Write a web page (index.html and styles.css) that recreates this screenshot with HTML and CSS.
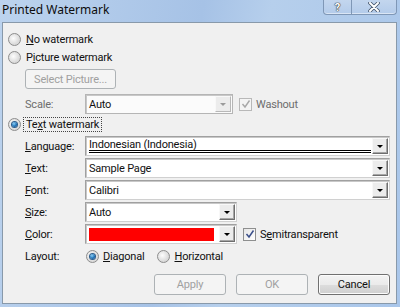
FILE: index.html
```html
<!DOCTYPE html>
<html>
<head>
    <title>Printed Watermark</title>
    <link rel="stylesheet" href="styles.css">
</head>
<body>
    <div class="frame">
        <div class="titlebar">
            <span class="title">Printed Watermark</span>
            <div class="caption-btns">
                <span class="cbtn help">?</span>
                <span class="cbtn close">
                    <svg width="12" height="10" viewBox="0 0 12 10">
                        <path d="M2 1 L10 9 M10 1 L2 9" stroke="#44546a" stroke-width="3.6" stroke-linecap="round"/>
                        <path d="M2 1 L10 9 M10 1 L2 9" stroke="#ffffff" stroke-width="2" stroke-linecap="round"/>
                    </svg>
                </span>
            </div>
        </div>
        <div class="client">
            <div class="opt row-no"><span class="radio"></span><span><u>N</u>o watermark</span></div>
            <div class="opt row-pic"><span class="radio"></span><span>P<u>i</u>cture watermark</span></div>
            <div class="indent">
                <div class="btn disabled select-pic">Select Picture...</div>
                <div class="field-row scale-row">
                    <span class="label disabled-text">Scale:</span>
                    <div class="combo disabled short-scale">
                        <span class="value">Auto</span>
                        <span class="drop"><span class="arrow gray"></span></span>
                    </div>
                    <div class="check disabled-check"><span class="box"><svg width="10" height="10" viewBox="0 0 10 10"><path d="M1.5 5 L4 8 L8.5 1.5" fill="none" stroke="#a8a8a8" stroke-width="1.4"/></svg></span><span class="disabled-text">Washout</span></div>
                </div>
            </div>
            <div class="opt row-text"><span class="radio on"></span><span class="focus">Te<u>x</u>t watermark</span></div>
            <div class="indent fields">
                <div class="field-row">
                    <span class="label"><u>L</u>anguage:</span>
                    <div class="combo wide">
                        <span class="value lang">Indonesian (Indonesia)</span>
                        <span class="drop"><span class="arrow"></span></span>
                    </div>
                </div>
                <div class="field-row">
                    <span class="label"><u>T</u>ext:</span>
                    <div class="combo wide">
                        <span class="value">Sample Page</span>
                        <span class="drop"><span class="arrow"></span></span>
                    </div>
                </div>
                <div class="field-row">
                    <span class="label"><u>F</u>ont:</span>
                    <div class="combo wide">
                        <span class="value">Calibri</span>
                        <span class="drop"><span class="arrow"></span></span>
                    </div>
                </div>
                <div class="field-row">
                    <span class="label"><u>S</u>ize:</span>
                    <div class="combo short">
                        <span class="value">Auto</span>
                        <span class="drop"><span class="arrow"></span></span>
                    </div>
                </div>
                <div class="field-row">
                    <span class="label"><u>C</u>olor:</span>
                    <div class="combo short">
                        <span class="swatch"></span>
                        <span class="drop"><span class="arrow"></span></span>
                    </div>
                    <div class="check"><span class="box"><svg width="10" height="10" viewBox="0 0 10 10"><path d="M1.5 5 L4 8 L8.5 1.5" fill="none" stroke="#3b4f8a" stroke-width="1.5"/></svg></span><span>S<u>e</u>mitransparent</span></div>
                </div>
                <div class="field-row layout-row">
                    <span class="label">Layout:</span>
                    <div class="opt inline"><span class="radio on"></span><span><u>D</u>iagonal</span></div>
                    <div class="opt inline"><span class="radio"></span><span><u>H</u>orizontal</span></div>
                </div>
            </div>
            <div class="actions">
                <div class="btn disabled">Apply</div>
                <div class="btn disabled">OK</div>
                <div class="btn">Cancel</div>
            </div>
        </div>
    </div>
</body>
</html>
```

FILE: styles.css
```css
body {
    margin: 0;
    font-family: Roboto, 'Noto Sans', sans-serif;
    font-size: 11px;
    letter-spacing: -0.2px;
    color: #111;
}
.frame {
    width: 400px;
    height: 307px;
    background: linear-gradient(100deg, #bcd3ee 0%, #a6c2e6 45%, #b6cfec 60%, #a9c6ea 100%);
    display: flex;
    flex-direction: column;
    box-sizing: border-box;
}
.titlebar {
    height: 22px;
    display: flex;
    align-items: flex-start;
    justify-content: space-between;
}
.title {
    font-family: 'Noto Sans', sans-serif;
    font-size: 12px;
    letter-spacing: 0;
    line-height: 20px;
    padding-left: 2px;
    color: #0c0c0c;
}
.caption-btns {
    display: flex;
    margin-right: 3px;
    height: 14px;
    border: 1px solid #7f97b6;
    border-top: none;
    border-radius: 0 0 4px 4px;
    background: linear-gradient(#c3d6ee, #b3cbea);
    box-shadow: inset 0 -1px 0 rgba(255, 255, 255, 0.5);
}
.cbtn {
    display: flex;
    align-items: center;
    justify-content: center;
    height: 14px;
}
.help {
    width: 27px;
    border-right: 1px solid #7f97b6;
    font-weight: bold;
    font-size: 11px;
    color: #fff;
    text-shadow: 0 0 1px #333, 0 0 1px #333, 0 0 1px #333;
}
.close {
    width: 44px;
}
.client {
    flex: 1;
    margin: 0 3px 3px 2px;
    border: 1px solid #8899aa;
    background: #f0f0f0;
    padding: 7px 0 0 5px;
    display: flex;
    flex-direction: column;
}
u {
    text-decoration-thickness: 1px;
    text-underline-offset: 1px;
}
.opt {
    display: flex;
    align-items: center;
    height: 18px;
    gap: 5px;
}
.radio {
    width: 11px;
    height: 11px;
    border-radius: 50%;
    border: 1px solid #8d8d8d;
    background: radial-gradient(circle at 40% 40%, #fdfdfd 0%, #dcdcdc 60%, #cfcfcf 100%);
    box-sizing: content-box;
    flex: none;
    display: flex;
    align-items: center;
    justify-content: center;
}
.radio.on::after {
    content: '';
    width: 5px;
    height: 5px;
    border-radius: 50%;
    background: radial-gradient(circle at 40% 35%, #8fd1f6 0%, #1d72b8 55%, #0c3f78 100%);
    box-shadow: 0 0 0 1px #2c5d8c;
}
.focus {
    outline: 1px dotted #444;
    outline-offset: 0;
    padding: 0 2px;
    margin-left: -2px;
}
.indent {
    padding-left: 17px;
    display: flex;
    flex-direction: column;
}
.fields {
    margin-top: 3px;
}
.btn {
    width: 70px;
    height: 19px;
    box-sizing: border-box;
    border: 1px solid #707070;
    border-radius: 3px;
    background: linear-gradient(#f3f3f3 0%, #ebebeb 50%, #dddddd 51%, #cfcfcf 100%);
    box-shadow: inset 0 0 0 1px #fcfcfc;
    display: flex;
    align-items: center;
    justify-content: center;
}
.btn.disabled {
    border-color: #adb2b5;
    background: #f4f4f4;
    box-shadow: none;
    color: #a0a0a0;
}
.select-pic {
    width: 91px;
    height: 20px;
    margin-top: 3px;
}
.field-row {
    display: flex;
    align-items: center;
    height: 20px;
    margin-bottom: 2px;
}
.scale-row {
    margin-top: 5px;
    margin-bottom: 1px;
}
.label {
    width: 60px;
    flex: none;
}
.disabled-text {
    color: #6d6d6d;
}
.combo {
    height: 20px;
    box-sizing: border-box;
    border: 1px solid #a0a0a0;
    border-right-color: #d0d0d0;
    border-bottom-color: #d0d0d0;
    background: #fff;
    box-shadow: inset 1px 1px 0 #c8c8c8;
    display: flex;
    align-items: center;
    padding-left: 3px;
    padding-right: 1px;
}
.combo.wide {
    width: 305px;
}
.combo.short {
    width: 152px;
}
.combo.short-scale {
    width: 148px;
}
.combo.disabled {
    background: #fbfbfb;
    border-color: #b5b5b5;
}
.value {
    flex: 1;
    white-space: nowrap;
}
.value.lang {
    align-self: stretch;
    display: flex;
    align-items: center;
    border-bottom: 3px double #000;
    margin-right: 1px;
    margin-bottom: 2px;
    padding-top: 2px;
}
.swatch {
    flex: 1;
    height: 13px;
    background: #ff0000;
    margin-right: 5px;
}
.drop {
    width: 16px;
    height: 16px;
    flex: none;
    box-sizing: border-box;
    background: #ececec;
    border: 1px solid;
    border-color: #f8f8f8 #6e6e6e #6e6e6e #f8f8f8;
    box-shadow: inset -1px -1px 0 #a6a6a6;
    display: flex;
    align-items: center;
    justify-content: center;
}
.combo.disabled .drop {
    border-color: #f8f8f8 #b8b8b8 #b8b8b8 #f8f8f8;
    box-shadow: none;
}
.arrow {
    width: 0;
    height: 0;
    border-left: 3px solid transparent;
    border-right: 3px solid transparent;
    border-top: 3px solid #000;
    margin-top: 1px;
}
.arrow.gray {
    border-top-color: #9a9a9a;
}
.check {
    display: flex;
    align-items: center;
    gap: 4px;
    margin-left: 6px;
}
.box {
    width: 11px;
    height: 11px;
    border: 1px solid #8e8f8f;
    background: linear-gradient(135deg, #e6e6e6, #ffffff);
    box-sizing: content-box;
    display: flex;
    align-items: center;
    justify-content: center;
}
.disabled-check .box {
    border-color: #b8b8b8;
    background: #f4f4f4;
}
.opt.inline {
    margin-left: 1px;
    margin-right: 12px;
    gap: 4px;
}
.actions {
    display: flex;
    justify-content: flex-end;
    gap: 10px;
    margin-top: 6px;
    padding-right: 6px;
}
.actions .btn {
    width: 72px;
    height: 21px;
}
```
